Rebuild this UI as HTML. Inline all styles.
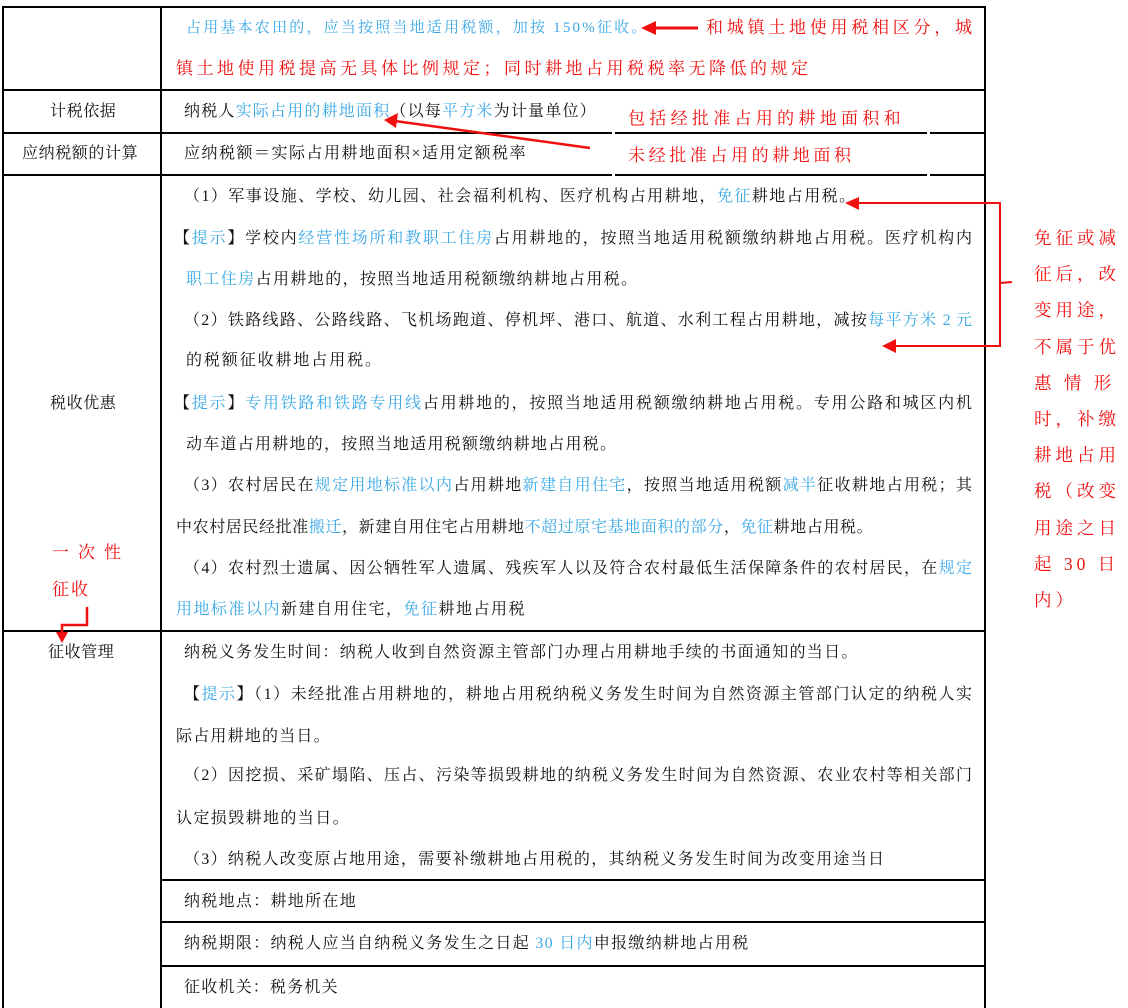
<!DOCTYPE html>
<html><head><meta charset="utf-8"><style>
html,body{margin:0;padding:0;background:#fff;}
body{width:1128px;height:1008px;position:relative;overflow:hidden;font-family:"Liberation Serif","Noto Serif CJK SC",serif;color:#111;}
.t{position:absolute;font-size:16px;line-height:20px;white-space:nowrap;letter-spacing:1.2px;}
.j{text-align:justify;text-align-last:justify;white-space:normal;letter-spacing:0;}
.b{color:#3aa8e6;}
.r{color:#f01010;font-size:17px;}
.h{position:absolute;height:2px;background:#000;}
.v{position:absolute;width:2px;background:#000;}
</style></head><body>
<div class="h" style="left:2px;top:6px;width:984px"></div>
<div class="h" style="left:2px;top:89px;width:984px"></div>
<div class="h" style="left:2px;top:132px;width:984px"></div>
<div class="h" style="left:2px;top:174px;width:984px"></div>
<div class="h" style="left:2px;top:630px;width:984px"></div>
<div class="h" style="left:161px;top:879px;width:825px"></div>
<div class="h" style="left:161px;top:921px;width:825px"></div>
<div class="h" style="left:161px;top:965px;width:825px"></div>
<div class="v" style="left:2px;top:6px;height:1002px"></div>
<div class="v" style="left:160px;top:6px;height:1002px"></div>
<div class="v" style="left:984px;top:6px;height:1002px"></div>
<div style="position:absolute;left:612px;top:131px;width:3px;height:46px;background:#fff"></div>
<div style="position:absolute;left:927px;top:131px;width:3px;height:46px;background:#fff"></div>

<div class="t" style="left:50px;top:102px;letter-spacing:0.6px">计税依据</div>
<div class="t" style="left:22px;top:144px;letter-spacing:0.6px">应纳税额的计算</div>
<div class="t" style="left:50px;top:394px;letter-spacing:0.6px">税收优惠</div>
<div class="t" style="left:48px;top:643px;letter-spacing:0.6px">征收管理</div>
<div class="t r" style="left:52px;top:543px;letter-spacing:9px">一次性</div>
<div class="t r" style="left:52px;top:580px;letter-spacing:2px">征收</div>

<div class="t b" style="left:186px;top:18px;font-size:15px;letter-spacing:2.2px">占用基本农田的，应当按照当地适用税额，加按 150%征收。</div>
<div class="t r" style="left:706px;top:18px;width:266px;letter-spacing:0"><span class="j" style="display:block;width:266px">和城镇土地使用税相区分，城</span></div>
<div class="t r" style="left:176px;top:59px;letter-spacing:3.5px">镇土地使用税提高无具体比例规定；同时耕地占用税税率无降低的规定</div>

<div class="t" style="left:184px;top:102px">纳税人<span class="b">实际占用的耕地面积</span>（以每<span class="b">平方米</span>为计量单位）</div>
<div class="t r" style="left:628px;top:109px;letter-spacing:4.3px">包括经批准占用的耕地面积和</div>
<div class="t" style="left:184px;top:144px;letter-spacing:1.5px">应纳税额＝实际占用耕地面积×适用定额税率</div>
<div class="t r" style="left:628px;top:146px;letter-spacing:3.6px">未经批准占用的耕地面积</div>

<div class="t" style="left:184px;top:187px;letter-spacing:1.45px">（1）军事设施、学校、幼儿园、社会福利机构、医疗机构占用耕地，<span class="b">免征</span>耕地占用税。</div>
<div class="t j" style="left:174px;top:229px;width:798px">【<span class="b">提示</span>】学校内<span class="b">经营性场所和教职工住房</span>占用耕地的，按照当地适用税额缴纳耕地占用税。医疗机构内</div>
<div class="t" style="left:186px;top:270px;letter-spacing:1.4px"><span class="b">职工住房</span>占用耕地的，按照当地适用税额缴纳耕地占用税。</div>
<div class="t j" style="left:184px;top:311px;width:788px">（2）铁路线路、公路线路、飞机场跑道、停机坪、港口、航道、水利工程占用耕地，减按<span class="b">每平方米 2 元</span></div>
<div class="t" style="left:186px;top:351px;letter-spacing:1.9px">的税额征收耕地占用税。</div>
<div class="t j" style="left:174px;top:394px;width:798px">【<span class="b">提示</span>】<span class="b">专用铁路和铁路专用线</span>占用耕地的，按照当地适用税额缴纳耕地占用税。专用公路和城区内机</div>
<div class="t" style="left:186px;top:435px;letter-spacing:1.25px">动车道占用耕地的，按照当地适用税额缴纳耕地占用税。</div>
<div class="t j" style="left:184px;top:476px;width:788px">（3）农村居民在<span class="b">规定用地标准以内</span>占用耕地<span class="b">新建自用住宅</span>，按照当地适用税额<span class="b">减半</span>征收耕地占用税；其</div>
<div class="t" style="left:176px;top:518px;letter-spacing:0.6px">中农村居民经批准<span class="b">搬迁</span>，新建自用住宅占用耕地<span class="b">不超过原宅基地面积的部分</span>，<span class="b">免征</span>耕地占用税。</div>
<div class="t j" style="left:184px;top:559px;width:788px">（4）农村烈士遗属、因公牺牲军人遗属、残疾军人以及符合农村最低生活保障条件的农村居民，在<span class="b">规定</span></div>
<div class="t" style="left:176px;top:600px;letter-spacing:1.5px"><span class="b">用地标准以内</span>新建自用住宅，<span class="b">免征</span>耕地占用税</div>

<div class="t r" style="left:1034px;top:220px;line-height:36.2px;width:90px;white-space:normal;letter-spacing:4px;font-size:17.5px">免征或减<br>征后，改<br>变用途，<br>不属于优<br>惠&nbsp;情&nbsp;形<br>时，补缴<br>耕地占用<br>税（改变<br>用途之日<br>起 30 日<br>内）</div>

<div class="t" style="left:184px;top:643px;letter-spacing:1.3px">纳税义务发生时间：纳税人收到自然资源主管部门办理占用耕地手续的书面通知的当日。</div>
<div class="t j" style="left:184px;top:685px;width:788px">【<span class="b">提示</span>】（1）未经批准占用耕地的，耕地占用税纳税义务发生时间为自然资源主管部门认定的纳税人实</div>
<div class="t" style="left:176px;top:727px;letter-spacing:1.2px">际占用耕地的当日。</div>
<div class="t j" style="left:184px;top:766px;width:788px">（2）因挖损、采矿塌陷、压占、污染等损毁耕地的纳税义务发生时间为自然资源、农业农村等相关部门</div>
<div class="t" style="left:176px;top:809px;letter-spacing:1.4px">认定损毁耕地的当日。</div>
<div class="t" style="left:184px;top:850px;letter-spacing:1.3px">（3）纳税人改变原占地用途，需要补缴耕地占用税的，其纳税义务发生时间为改变用途当日</div>
<div class="t" style="left:184px;top:892px;letter-spacing:1.3px">纳税地点：耕地所在地</div>
<div class="t" style="left:184px;top:934px;letter-spacing:1.3px">纳税期限：纳税人应当自纳税义务发生之日起 <span class="b">30 日内</span>申报缴纳耕地占用税</div>
<div class="t" style="left:184px;top:978px;letter-spacing:1.2px">征收机关：税务机关</div>

<svg style="position:absolute;left:0;top:0" width="1128" height="1008">
<g fill="#f01010" stroke="#f01010">
<line x1="652" y1="28" x2="698" y2="28" stroke-width="3"/>
<polygon points="641,28 656,21 656,35" stroke="none"/>
<line x1="590" y1="148" x2="395" y2="121" stroke-width="2.5"/>
<polygon points="384,120 398,113 396,128" stroke="none"/>
<polyline points="858,203 1000,203 1000,346 895,346" fill="none" stroke-width="2"/>
<line x1="1000" y1="283" x2="1012" y2="282" stroke-width="2"/>
<polygon points="845,203 859,197 859,210" stroke="none"/>
<polygon points="882,346 896,339 896,353" stroke="none"/>
<polyline points="87,607 87,625 62,625 62,634" fill="none" stroke-width="2.5"/>
<polygon points="56,632 68,632 62,643" stroke="none"/>
</g>
</svg>
</body></html>
